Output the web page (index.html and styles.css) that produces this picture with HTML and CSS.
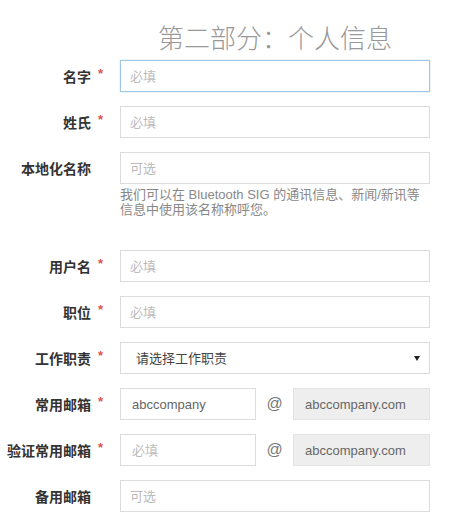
FILE: index.html
```html
<!DOCTYPE html>
<html lang="zh-CN">
<head>
<meta charset="utf-8">
<title>个人信息</title>
<link rel="stylesheet" href="styles.css">
</head>
<body>
<form class="form">
  <h2 class="title">第二部分：个人信息</h2>

  <div class="row">
    <label class="label"><span class="label-text">名字</span><span class="star">*</span></label>
    <input class="field focused" type="text" placeholder="必填">
  </div>

  <div class="row">
    <label class="label"><span class="label-text">姓氏</span><span class="star">*</span></label>
    <input class="field" type="text" placeholder="必填">
  </div>

  <div class="row row-help">
    <label class="label"><span class="label-text">本地化名称</span><span class="star"></span></label>
    <div class="control">
      <input class="field" type="text" placeholder="可选">
      <p class="help">我们可以在 Bluetooth SIG 的通讯信息、新闻/新讯等信息中使用该名称称呼您。</p>
    </div>
  </div>

  <div class="row">
    <label class="label"><span class="label-text">用户名</span><span class="star">*</span></label>
    <input class="field" type="text" placeholder="必填">
  </div>

  <div class="row">
    <label class="label"><span class="label-text">职位</span><span class="star">*</span></label>
    <input class="field" type="text" placeholder="必填">
  </div>

  <div class="row">
    <label class="label"><span class="label-text">工作职责</span><span class="star">*</span></label>
    <div class="select-wrap">
      <select class="field select">
        <option>请选择工作职责</option>
      </select>
      <span class="arrow"></span>
    </div>
  </div>

  <div class="row">
    <label class="label"><span class="label-text">常用邮箱</span><span class="star">*</span></label>
    <div class="email">
      <input class="field email-user" type="text" value="abccompany">
      <span class="at">@</span>
      <span class="domain">abccompany.com</span>
    </div>
  </div>

  <div class="row">
    <label class="label"><span class="label-text">验证常用邮箱</span><span class="star">*</span></label>
    <div class="email">
      <input class="field email-user" type="text" placeholder="必填">
      <span class="at">@</span>
      <span class="domain">abccompany.com</span>
    </div>
  </div>

  <div class="row">
    <label class="label"><span class="label-text">备用邮箱</span><span class="star"></span></label>
    <input class="field" type="text" placeholder="可选">
  </div>
</form>
</body>
</html>
```

FILE: styles.css
```css
html, body {
  margin: 0;
  padding: 0;
  background: #fff;
}

body {
  font-family: "Liberation Sans", "Noto Sans CJK SC", sans-serif;
  color: #333;
}

.form {
  padding-top: 22px;
  width: 430px;
}

.title {
  margin: 0 0 8px 120px;
  width: 310px;
  text-align: center;
  font-size: 26px;
  line-height: 30px;
  font-weight: 300;
  color: #999;
  font-family: "Noto Sans CJK SC", sans-serif;
}

.row {
  display: grid;
  grid-template-columns: 120px 310px;
  align-items: start;
  margin-bottom: 14px;
}

.row-help {
  margin-bottom: 33px;
}

.label {
  display: flex;
  height: 32px;
  align-items: center;
  font-family: "Noto Sans CJK SC", sans-serif;
  font-weight: bold;
  font-size: 14px;
  color: #333;
}

.label-text {
  width: 91px;
  text-align: right;
  white-space: nowrap;
}

.star {
  width: 29px;
  padding-left: 7px;
  box-sizing: border-box;
  color: #d9534f;
  font-family: "Liberation Sans", sans-serif;
  font-size: 13px;
  line-height: 13px;
  position: relative;
  top: -3px;
}

.field {
  box-sizing: border-box;
  height: 32px;
  width: 100%;
  margin: 0;
  border: 1px solid #dcdcdc;
  border-radius: 0;
  padding: 0 9px;
  font-family: "Liberation Sans", "Noto Sans CJK SC", sans-serif;
  font-size: 13px;
  color: #666;
  background: #fff;
  outline: none;
}

.field::placeholder {
  color: #bbb;
}

.focused {
  border-color: #9fc4e4;
  box-shadow: 0 0 2px rgba(102, 175, 233, 0.35);
}

.control {
  display: flex;
  flex-direction: column;
}

.help {
  margin: 3px 0 0;
  font-size: 13px;
  line-height: 15px;
  color: #888;
}

.select-wrap {
  position: relative;
}

.select {
  appearance: none;
  -webkit-appearance: none;
  padding-left: 15px;
  color: #444;
}

.arrow {
  position: absolute;
  right: 10px;
  top: 14px;
  width: 0;
  height: 0;
  border-left: 3px solid transparent;
  border-right: 3px solid transparent;
  border-top: 5px solid #222;
  pointer-events: none;
}

.email {
  display: grid;
  grid-template-columns: 136px 37px 137px;
  align-items: center;
}

.email-user {
  padding-left: 11px;
}

.at {
  text-align: center;
  font-size: 16px;
  color: #777;
}

.domain {
  box-sizing: border-box;
  height: 32px;
  display: flex;
  align-items: center;
  padding-left: 11px;
  background: #eee;
  border: 1px solid #e3e3e3;
  font-size: 13px;
  color: #666;
}
```
